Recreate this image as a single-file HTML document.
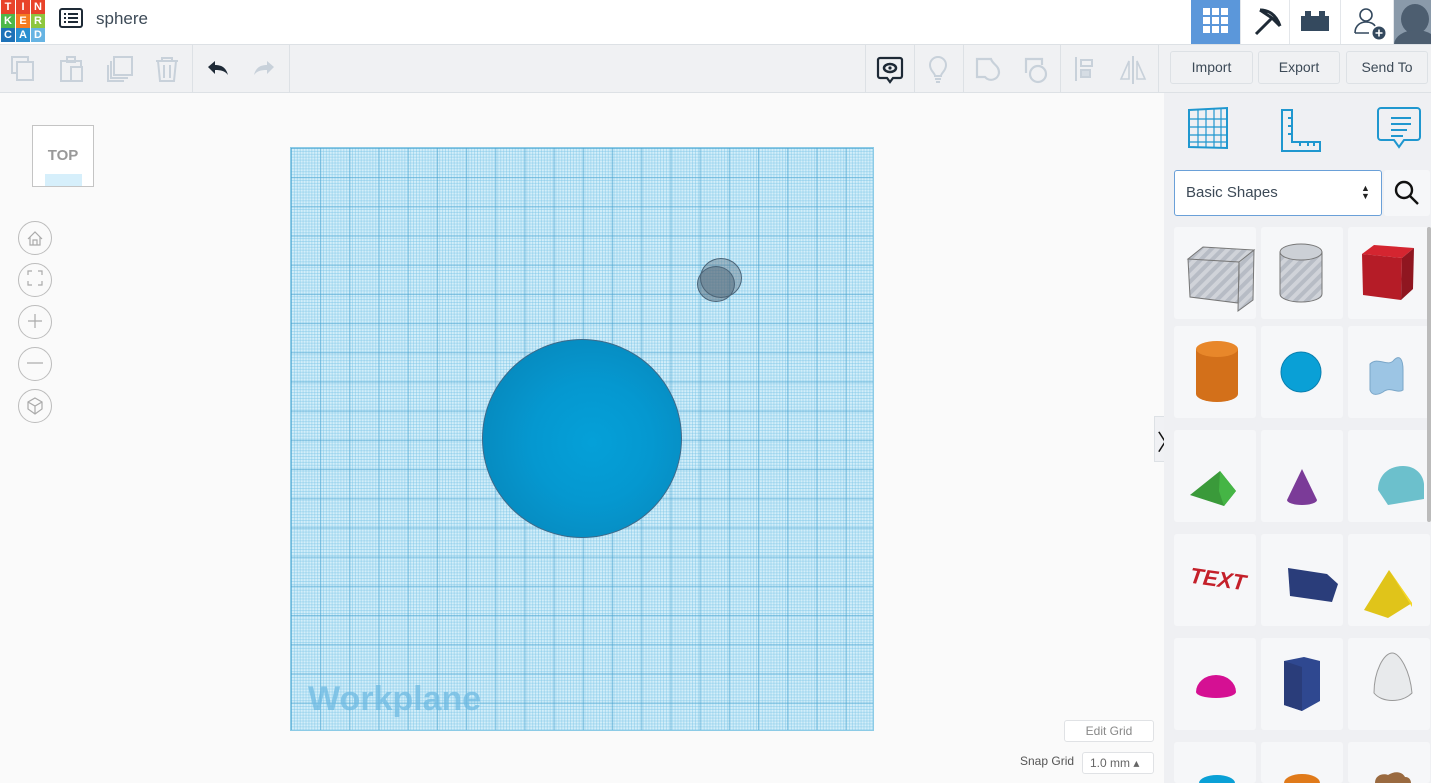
<!DOCTYPE html>
<html style="width:1431px;height:783px;overflow:hidden"><head><meta charset="utf-8"><style>
*{margin:0;padding:0;box-sizing:border-box}
body{width:1431px;height:783px;overflow:hidden;background:#fafafa;font-family:"Liberation Sans",sans-serif;position:relative}
.abs{position:absolute}
.top{left:0;top:0;width:1431px;height:45px;background:#fff;border-bottom:1px solid #dde1e5;box-shadow:0 1px 2px rgba(0,0,0,.08)}
.tb{left:0;top:45px;width:1431px;height:48px;background:#f0f1f3;border-bottom:1px solid #dde1e5}
.logo div{position:absolute;width:14px;height:14px;color:#fff;font:bold 11px "Liberation Sans";text-align:center;line-height:14px}
.vsep{position:absolute;top:45px;width:1px;height:47px;background:#dde1e5}
.btn{position:absolute;top:51px;height:33px;border:1px solid #dde1e5;border-radius:3px;background:#f0f1f3;color:#3d4a57;font-size:14px;text-align:center;line-height:31px}
.wp{left:290px;top:147px;width:584px;height:584px;border:1px solid #8ccbe6;
background:
linear-gradient(90deg,rgba(70,160,205,.55) 1px,transparent 1px) 0 0/29.2px 29.2px,
linear-gradient(rgba(70,160,205,.55) 1px,transparent 1px) 0 0/29.2px 29.2px,
linear-gradient(90deg,rgba(120,195,230,.45) 1px,transparent 1px) 0 0/2.92px 2.92px,
linear-gradient(rgba(120,195,230,.45) 1px,transparent 1px) 0 0/2.92px 2.92px,#d3eef9}
.side{left:1164px;top:93px;width:267px;height:690px;background:#eff0f3}
.tile{position:absolute;width:82px;height:92px;background:#f6f7f9;border-radius:3px}
.circ{position:absolute;left:18px;width:34px;height:34px;border:1px solid #bcbcbc;border-radius:50%;background:#fafafa}
</style></head><body>
<div class="abs top"></div>
<div class="abs logo" style="left:1px;top:0">
<div style="left:0;top:0;background:#e8432a">T</div><div style="left:15px;top:0;background:#e8432a">I</div><div style="left:30px;top:0;background:#e8432a">N</div>
<div style="left:0;top:14px;background:#4db849">K</div><div style="left:15px;top:14px;background:#f47b20">E</div><div style="left:30px;top:14px;background:#8dc63f">R</div>
<div style="left:0;top:28px;background:#1e72b8">C</div><div style="left:15px;top:28px;background:#2a8fd0">A</div><div style="left:30px;top:28px;background:#67b4e3">D</div>
</div>
<svg class="abs" style="left:59px;top:8px" width="24" height="20"><rect x="1" y="1" width="22" height="18" rx="2" fill="none" stroke="#1e2a36" stroke-width="2"/><path d="M5 6h2M9 6h10M5 10h2M9 10h10M5 14h2M9 14h10" stroke="#1e2a36" stroke-width="2"/></svg>
<div class="abs" style="left:96px;top:9px;font-size:17px;color:#3d4a57">sphere</div>
<div class="abs" style="left:1191px;top:0;width:49px;height:44px;background:#5b97da"></div>
<svg class="abs" style="left:1203px;top:8px" width="25" height="25" fill="#fff"><rect x="0" y="0" width="7" height="7"/><rect x="9" y="0" width="7" height="7"/><rect x="18" y="0" width="7" height="7"/><rect x="0" y="9" width="7" height="7"/><rect x="9" y="9" width="7" height="7"/><rect x="18" y="9" width="7" height="7"/><rect x="0" y="18" width="7" height="7"/><rect x="9" y="18" width="7" height="7"/><rect x="18" y="18" width="7" height="7"/></svg>
<svg class="abs" style="left:1250px;top:6px" width="32" height="32"><path d="M6 28L22 12M10 4c8 0 16 4 20 16M10 4l12 8 8 8" stroke="#1e2a36" stroke-width="3" fill="none"/></svg>
<svg class="abs" style="left:1300px;top:10px" width="30" height="22"><path d="M1 6h4V1h6v5h8V1h6v5h4v15H1z" fill="#34495e"/></svg>
<div class="abs" style="left:1240px;top:0;width:1px;height:44px;background:#e3e6ea"></div>
<div class="abs" style="left:1289px;top:0;width:1px;height:44px;background:#e3e6ea"></div>
<div class="abs" style="left:1340px;top:0;width:1px;height:44px;background:#e3e6ea"></div>
<div class="abs" style="left:1393px;top:0;width:1px;height:44px;background:#e3e6ea"></div>
<svg class="abs" style="left:1352px;top:5px" width="36" height="36"><circle cx="14" cy="10" r="6" fill="none" stroke="#34495e" stroke-width="1.6"/><path d="M3 28c0-8 6-11 11-11s8 2 9 4M3 28h14" fill="none" stroke="#34495e" stroke-width="1.6"/><circle cx="27" cy="28" r="6.5" fill="#34495e"/><path d="M27 24.5v7M23.5 28h7" stroke="#fff" stroke-width="1.6"/></svg>
<div class="abs" style="left:1394px;top:0;width:37px;height:44px;background:#8a9aaa;overflow:hidden"><div class="abs" style="left:7px;top:4px;width:28px;height:30px;border-radius:50%;background:#4d5e70"></div><div class="abs" style="left:0;top:30px;width:44px;height:30px;border-radius:50%;background:#4d5e70"></div></div>

<div class="abs tb"></div>
<svg class="abs" style="left:10px;top:55px" width="180" height="28" fill="none" stroke="#c8d1da" stroke-width="2">
<rect x="2" y="2" width="16" height="16"/><rect x="7" y="7" width="16" height="18" fill="#f0f1f3"/>
<rect x="51" y="6" width="20" height="20"/><rect x="57" y="2" width="8" height="5"/><rect x="61" y="12" width="11" height="14" fill="#f0f1f3"/>
<rect x="104" y="2" width="18" height="18"/><path d="M101 6v17h17"/><path d="M98 10v16h16"/>
<path d="M146 6h22M152 6V3h10v3M148 6l2 20h14l2-20M154 10v13M160 10v13"/>
</svg>
<div class="vsep" style="left:192px"></div>
<svg class="abs" style="left:204px;top:57px" width="72" height="22"><path d="M4 10l7-6v4c6 0 11 2 13 10-3-4-7-5-13-5v4z" fill="#1e2a36"/><path d="M72 10l-7-6v4c-6 0-11 2-13 10 3-4 7-5 13-5v4z" transform="translate(-2 0)" fill="#c8d1da"/></svg>
<div class="vsep" style="left:289px"></div>
<div class="vsep" style="left:865px"></div>
<div class="vsep" style="left:914px"></div>
<div class="vsep" style="left:963px"></div>
<div class="vsep" style="left:1060px"></div>
<div class="vsep" style="left:1158px"></div>
<svg class="abs" style="left:876px;top:55px" width="290" height="30" fill="none">
<path d="M4 3h20a2 2 0 012 2v16a2 2 0 01-2 2h-7l-3 4-3-4H4a2 2 0 01-2-2V5a2 2 0 012-2z" stroke="#1e2a36" stroke-width="2.2"/><ellipse cx="14" cy="13" rx="6" ry="4" stroke="#1e2a36" stroke-width="2.5"/><circle cx="14" cy="13" r="1.6" fill="#1e2a36"/>
<path d="M59 21c0-3-5-5-5-11a8 8 0 0116 0c0 6-5 8-5 11zM59 24h6M60 27h4" stroke="#c8d1da" stroke-width="2"/>
<path d="M101 4h14c2 6 8 6 8 14a8 8 0 01-14 4H101z" stroke="#c8d1da" stroke-width="2.2"/>
<path d="M150 18V4h16v6" stroke="#c8d1da" stroke-width="2.2"/><circle cx="162" cy="19" r="8" stroke="#c8d1da" stroke-width="2.2"/>
<path d="M200 2v24" stroke="#c8d1da" stroke-width="2"/><rect x="205" y="5" width="11" height="6" stroke="#c8d1da" stroke-width="2"/><rect x="205" y="15" width="9" height="7" stroke="#c8d1da" stroke-width="2" fill="#d6dde4"/>
<path d="M257 1v28" stroke="#c8d1da" stroke-width="2"/><path d="M253 6l-8 18h8zM261 6l8 18h-8z" stroke="#c8d1da" stroke-width="1.6"/>
</svg>
<div class="btn" style="left:1170px;width:83px">Import</div>
<div class="btn" style="left:1258px;width:82px">Export</div>
<div class="btn" style="left:1346px;width:82px">Send To</div>

<div class="abs" style="left:32px;top:125px;width:62px;height:62px;border:1px solid #c4c4c4;background:#fff"></div>
<div class="abs" style="left:45px;top:174px;width:37px;height:12px;background:#d6effb"></div>
<div class="abs" style="left:32px;top:147px;width:62px;text-align:center;font:bold 15px 'Liberation Sans';color:#999">TOP</div>
<div class="circ" style="top:221px"></div><div class="circ" style="top:263px"></div><div class="circ" style="top:305px"></div><div class="circ" style="top:347px"></div><div class="circ" style="top:389px"></div>
<svg class="abs" style="left:18px;top:221px" width="34" height="202" fill="none" stroke="#aaa" stroke-width="1.2">
<path d="M10 18l7-7 7 7M12 16v8h10v-8M15 24v-5h4v5"/>
<path d="M10 54v-4h4M20 50h4v4M24 60v4h-4M14 64h-4v-4"/>
<path d="M17 93v14M10 100h14"/>
<path d="M9 142h16"/>
<path d="M17 177l7 4v7l-7 5-7-5v-7zM10 181l7 4 7-4M17 185v8"/>
</svg>

<div class="abs wp"></div>
<div class="abs" style="left:308px;top:680px;font:bold 34px 'Liberation Sans';color:rgba(110,185,225,.75)">Workplane</div>
<div class="abs" style="left:482px;top:339px;width:200px;height:199px;border-radius:50%;border:1.5px solid #3d6a8a;background:radial-gradient(circle at 55% 52%,#05a0d8 0%,#0598d0 40%,#0789bd 80%,#0a78a6 100%)"></div>
<div class="abs" style="left:700px;top:258px;width:42px;height:40px;border-radius:50%;border:1.5px solid #4a6478;background:rgba(100,120,135,.45)"></div>
<div class="abs" style="left:697px;top:266px;width:38px;height:36px;border-radius:50%;border:1.5px solid #4a6478;background:rgba(80,100,115,.5)"></div>

<div class="abs" style="left:1154px;top:416px;width:11px;height:46px;background:#f0f1f4;border:1px solid #dde1e5;border-right:none"></div>
<div class="abs" style="left:1157px;top:425px;font-size:22px;color:#111">〉</div>
<div class="abs" style="left:1064px;top:720px;width:90px;height:22px;border:1px solid #e0e2e5;border-radius:3px;background:#fff;color:#888;font-size:12px;text-align:center;line-height:20px">Edit Grid</div>
<div class="abs" style="left:1020px;top:754px;font-size:12px;color:#555">Snap Grid</div>
<div class="abs" style="left:1082px;top:752px;width:72px;height:22px;border:1px solid #e0e2e5;border-radius:3px;background:#fff;color:#666;font-size:12px;line-height:20px;padding-left:7px">1.0 mm &#9652;</div>

<div class="abs side"></div>
<svg class="abs" style="left:1186px;top:106px" width="240" height="48" fill="none" stroke="#1f97cf" stroke-width="2">
<path d="M3 4l38-2v40l-38-1z"/><path d="M3 13h38M3 21h38M3 29h38M3 36h38M12 3v38M20 3v38M28 3v38M35 3v38" stroke-width="1.2"/>
<path d="M96 4h10v32h28v9H96zM106 12h-4M106 20h-4M106 28h-4M114 36v4M122 36v4M128 36v4"/>
<path d="M195 2h36a3 3 0 013 3v26a3 3 0 01-3 3h-13l-5 7-5-7h-13a3 3 0 01-3-3V5a3 3 0 013-3zM205 12h20M205 18h20M205 24h16M205 30h12" />
</svg>
<div class="abs" style="left:1174px;top:170px;width:208px;height:46px;border:1px solid #6aa0d8;border-radius:3px;background:#fff;color:#3d4a57;font-size:15px;line-height:44px;padding-left:11px">Basic Shapes</div>
<div class="abs" style="left:1361px;top:184px;font-size:9px;line-height:8px;color:#222">▲<br>▼</div>
<div class="abs" style="left:1384px;top:170px;width:46px;height:46px;background:#f6f7f9;border-radius:3px"></div>
<svg class="abs" style="left:1394px;top:180px" width="26" height="26" fill="none" stroke="#111" stroke-width="2.4"><circle cx="10" cy="10" r="8"/><path d="M16 16l8 8"/></svg>

<div class="tile" style="left:1174px;top:227px"></div><div class="tile" style="left:1261px;top:227px"></div><div class="tile" style="left:1348px;top:227px"></div>
<div class="tile" style="left:1174px;top:326px"></div><div class="tile" style="left:1261px;top:326px"></div><div class="tile" style="left:1348px;top:326px"></div>
<div class="tile" style="left:1174px;top:430px"></div><div class="tile" style="left:1261px;top:430px"></div><div class="tile" style="left:1348px;top:430px"></div>
<div class="tile" style="left:1174px;top:534px"></div><div class="tile" style="left:1261px;top:534px"></div><div class="tile" style="left:1348px;top:534px"></div>
<div class="tile" style="left:1174px;top:638px"></div><div class="tile" style="left:1261px;top:638px"></div><div class="tile" style="left:1348px;top:638px"></div>
<div class="tile" style="left:1174px;top:742px;height:41px"></div><div class="tile" style="left:1261px;top:742px;height:41px"></div><div class="tile" style="left:1348px;top:742px;height:41px"></div>
<div class="abs" style="left:1427px;top:227px;width:4px;height:295px;background:#bbb;border-radius:2px"></div>
<svg class="abs" style="left:1174px;top:227px" width="257" height="556">
<defs><pattern id="h" width="8" height="8" patternUnits="userSpaceOnUse" patternTransform="rotate(45)"><rect width="8" height="8" fill="#d0d3d9"/><rect width="4" height="8" fill="#b7bcc5"/></pattern></defs>
<path d="M14 32l15-12 51 3-15 12z M14 32l51 3v14l-1 27-48-6z M65 35l15-12-1 50-15 11z" fill="url(#h)" stroke="#777"/>
<path d="M106 25v42a21 8 0 0042 0V25z" fill="url(#h)" stroke="#777"/><ellipse cx="127" cy="25" rx="21" ry="8" fill="#ccd0d6" stroke="#777"/>
<path d="M188 27l12-9 40 3-12 10z" fill="#d42530"/><path d="M188 27l40 4-1 42-38-5z" fill="#b51c27"/><path d="M228 31l12-10-1 41-12 11z" fill="#8f1620"/>
<path d="M22 122v45a21 8 0 0042 0v-45z" fill="#d3701a"/><ellipse cx="43" cy="122" rx="21" ry="8" fill="#e8872a"/>
<circle cx="127" cy="145" r="20" fill="#0aa0d6"/><circle cx="127" cy="145" r="20" fill="none" stroke="#0a80b0"/>
<path d="M196 137c8-8 18 4 24-4 6-6 9 0 9 10v20c-6 4-12-4-20 2-5 3-11 4-13-2z" fill="#9cc5e4" stroke="#7aa6c8"/>
<path d="M16 268l30-24 16 20-12 15z" fill="#3a9a3a"/><path d="M46 244l16 20-12 15-5-15z" fill="#45b545"/>
<path d="M128 242l-15 31a15 5 0 0030 0z" fill="#7b3b98"/>
<path d="M204 263c0-14 10-24 25-24 12 0 20 8 21 18v15l-36 6z" fill="#6cc0cc"/>
<text x="16" y="359" font-family="Liberation Sans" font-weight="bold" font-style="italic" font-size="22" fill="#c4202a" transform="rotate(8 40 350)">TEXT</text>
<path d="M114 341l39 6 11 10-6 18-42-6z" fill="#2a3d7a"/>
<path d="M215 343l-25 40 24 8 24-15z" fill="#e0c41a"/><path d="M215 343l23 33 0 4" fill="#f5d726"/>
<path d="M22 465a20 17 0 0140 0 20 6 0 01-40 0z" fill="#d51093"/>
<path d="M110 434l20-4 16 4v40l-18 10-18-6z" fill="#2f4890"/><path d="M110 434l18 6v44l-18-6z" fill="#2a3d7a"/>
<path d="M200 466c0-22 10-40 18-40 8 0 18 18 20 40-10 10-30 10-38 0z" fill="#e8eaec" stroke="#999"/>
<ellipse cx="43" cy="556" rx="18" ry="8" fill="#0aa0d6"/><ellipse cx="128" cy="556" rx="18" ry="9" fill="#e07a1a"/><path d="M201 556c0-8 8-10 13-8 6-4 14-4 17 2 5 0 6 4 6 6z" fill="#9a6a40"/>
</svg>
</body></html>
